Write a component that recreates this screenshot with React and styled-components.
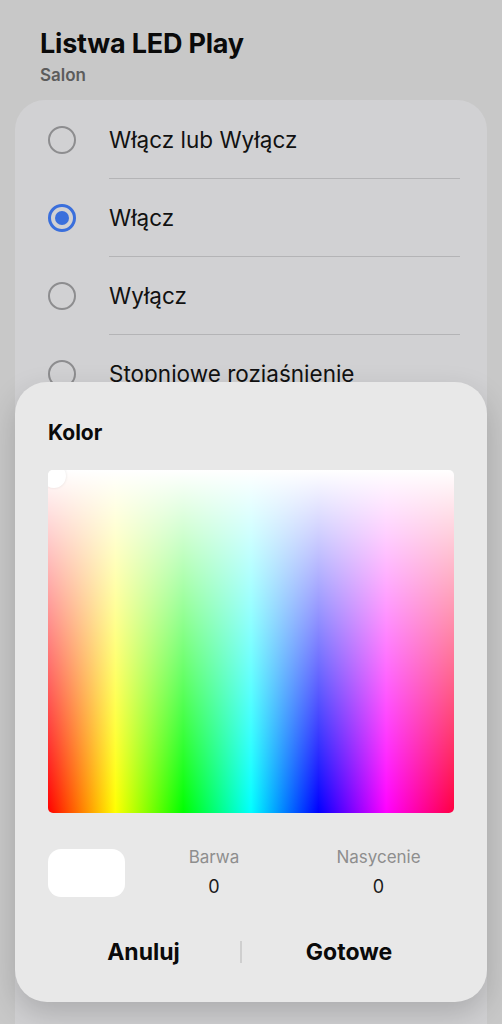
import styled, { createGlobalStyle } from "styled-components";

const GlobalStyle = createGlobalStyle`
  html, body {
    margin: 0;
    padding: 0;
    background: #c8c8c8;
  }
  * {
    box-sizing: border-box;
  }
  body {
    font-family: Inter, "Noto Sans", "Liberation Sans", sans-serif;
  }
`;

const options = [
  { label: "Włącz lub Wyłącz", checked: false },
  { label: "Włącz", checked: true },
  { label: "Wyłącz", checked: false },
  { label: "Stopniowe rozjaśnienie", checked: false },
  { label: "Stopniowe ściemnienie", checked: false },
  { label: "Kolor", checked: false },
];

function App() {
  return (
    <>
      <GlobalStyle />
      <Page>
        <Header>
          <Title>Listwa LED Play</Title>
          <Subtitle>Salon</Subtitle>
        </Header>
        <Card>
          {options.map((o, i) => (
            <Row key={o.label}>
              <Radio checked={o.checked} />
              <RowLabel last={i === options.length - 1}>{o.label}</RowLabel>
            </Row>
          ))}
        </Card>

        <Dialog>
          <DialogTitle>Kolor</DialogTitle>
          <Spectrum>
            <Knob />
          </Spectrum>
          <Values>
            <Swatch />
            <Value>
              <ValueName>Barwa</ValueName>
              <ValueNumber>0</ValueNumber>
            </Value>
            <Value>
              <ValueName>Nasycenie</ValueName>
              <ValueNumber>0</ValueNumber>
            </Value>
          </Values>
          <Actions>
            <Action>Anuluj</Action>
            <ActionDivider />
            <Action>Gotowe</Action>
          </Actions>
        </Dialog>
      </Page>
    </>
  );
}

const Page = styled.div`
  position: relative;
  width: 502px;
  height: 1024px;
  overflow: hidden;
  background: #c8c8c8;
  padding: 27px 15px 0;
`;

const Header = styled.div`
  padding: 0 25px;
  display: flex;
  flex-direction: column;
  gap: 3px;
`;

const Title = styled.div`
  font-size: 27px;
  line-height: 34px;
  font-weight: 700;
  color: #0a0a0a;
  letter-spacing: -0.2px;
`;

const Subtitle = styled.div`
  font-size: 17px;
  line-height: 22px;
  font-weight: 600;
  color: #5c5c5c;
`;

const Card = styled.div`
  margin-top: 14px;
  background: #d1d1d3;
  border-radius: 30px;
  padding: 1px 27px 0 33px;
  height: 1000px;
`;

const Row = styled.div`
  display: flex;
  align-items: stretch;
  height: 78px;
`;

const Radio = styled.div`
  flex: none;
  align-self: center;
  width: 28px;
  height: 28px;
  border-radius: 50%;
  border: ${(p) => (p.checked ? "3px solid #3a6fdc" : "2px solid #8d8d8f")};
  margin-right: 33px;
  display: flex;
  align-items: center;
  justify-content: center;

  &::after {
    content: "";
    display: ${(p) => (p.checked ? "block" : "none")};
    width: 14px;
    height: 14px;
    border-radius: 50%;
    background: #3a6fdc;
  }
`;

const RowLabel = styled.div`
  flex: 1;
  display: flex;
  align-items: center;
  font-size: 22.5px;
  color: #111;
  border-bottom: ${(p) => (p.last ? "none" : "1.5px solid #b4b4b6")};
`;

const Dialog = styled.div`
  position: absolute;
  left: 15px;
  right: 15px;
  top: 382px;
  height: 620px;
  background: #e8e8e8;
  border-radius: 32px;
  box-shadow: 0 12px 30px rgba(0, 0, 0, 0.18);
  padding: 38px 33px 0;
  display: flex;
  flex-direction: column;
`;

const DialogTitle = styled.div`
  font-size: 21px;
  line-height: 25px;
  font-weight: 700;
  color: #0a0a0a;
`;

const Spectrum = styled.div`
  position: relative;
  margin-top: 25px;
  height: 343px;
  border-radius: 5px;
  overflow: hidden;
  background: linear-gradient(to bottom, #ffffff 0%, rgba(255, 255, 255, 0) 100%),
    linear-gradient(
      to right,
      #ff0000 0%,
      #ffff00 16.6%,
      #00ff00 33.3%,
      #00ffff 50%,
      #0000ff 66.6%,
      #ff00ff 83.3%,
      #ff0040 100%
    );
`;

const Knob = styled.div`
  position: absolute;
  left: -6px;
  top: -6px;
  width: 24px;
  height: 24px;
  border-radius: 50%;
  background: #fff;
  box-shadow: 0 0 3px rgba(0, 0, 0, 0.1);
`;

const Values = styled.div`
  margin-top: 35px;
  display: grid;
  grid-template-columns: 77px 178px 1fr;
  align-items: center;
`;

const Swatch = styled.div`
  height: 48px;
  border-radius: 13px;
  background: #fff;
`;

const Value = styled.div`
  display: flex;
  flex-direction: column;
  align-items: center;
  gap: 9px;
  margin-top: -1px;
`;

const ValueName = styled.div`
  font-size: 17px;
  line-height: 20px;
  color: #8e8e8e;
`;

const ValueNumber = styled.div`
  font-size: 18px;
  line-height: 22px;
  color: #1a1a1a;
`;

const Actions = styled.div`
  margin-top: 39px;
  margin-left: -1px;
  display: grid;
  grid-template-columns: 193px 2px 214px;
  align-items: center;
`;

const Action = styled.div`
  text-align: center;
  font-size: 23px;
  line-height: 30px;
  font-weight: 700;
  color: #0a0a0a;
`;

const ActionDivider = styled.div`
  width: 1.5px;
  height: 22px;
  background: #cfcfcf;
`;

export default App;
